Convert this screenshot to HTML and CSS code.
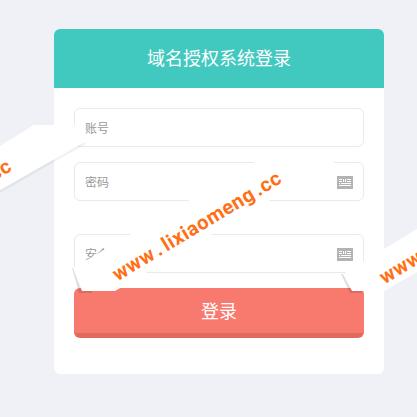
FILE: index.html
```html
<!DOCTYPE html>
<html lang="zh-CN">
<head>
    <meta charset="UTF-8">
    <meta name="viewport" content="width=device-width, initial-scale=1.0">
    <title>域名授权系统登录</title>
    <link rel="stylesheet" href="styles.css">
</head>
<body>
    <div class="login-box">
        <div class="login-title">域名授权系统登录</div>
        <form class="login-form">
            <div class="field"><input type="text" placeholder="账号"></div>
            <div class="field">
                <input type="password" placeholder="密码">
                <svg class="kbd-icon" viewBox="0 0 16 13">
                    <path d="M0 0h16v13H0z" fill="#b3b3b3"/>
                    <path d="M2 3h3v1H2zM6 3h1v3H6zM8 3h1v3H8zM10 3h4v1h-4zM2 5h3v1H2zM10 5h4v1h-4zM2 7h1v1H2zM4 7h10v1H4zM2 9h12v1H2z" fill="#fff"/>
                </svg>
            </div>
            <div class="field field-code">
                <input type="text" placeholder="安全码">
                <svg class="kbd-icon" viewBox="0 0 16 13">
                    <path d="M0 0h16v13H0z" fill="#b3b3b3"/>
                    <path d="M2 3h3v1H2zM6 3h1v3H6zM8 3h1v3H8zM10 3h4v1h-4zM2 5h3v1H2zM10 5h4v1h-4zM2 7h1v1H2zM4 7h10v1H4zM2 9h12v1H2z" fill="#fff"/>
                </svg>
            </div>
            <button type="button" class="login-btn">登录</button>
        </form>
    </div>

    <!-- watermark bands over the form -->
    <div class="wm wm-left"><div class="wm-band"></div><span class="wm-text">www . lixiaomeng .cc</span></div>
    <div class="wm wm-mid"><div class="wm-band"></div><span class="wm-text">www . lixiaomeng .cc</span></div>
    <div class="wm wm-right"><div class="wm-band"></div><span class="wm-text">www . lixiaomeng .cc</span></div>
</body>
</html>
```
FILE: styles.css
```css
* {
    margin: 0;
    padding: 0;
    box-sizing: border-box;
    font-family: "Noto Sans CJK SC", "Liberation Sans", sans-serif;
}

body {
    background: #f0f1f7;
    height: 417px;
    overflow: hidden;
    position: relative;
    padding: 29px 0 0 54px;
}

.login-box {
    width: 330px;
    height: 345px;
    background: #fff;
    border-radius: 6px;
    overflow: hidden;
}

.login-title {
    height: 59px;
    line-height: 57px;
    background: #42c9bf;
    color: #fff;
    font-size: 18px;
    text-align: center;
}

.login-form {
    padding: 20px;
    display: flex;
    flex-direction: column;
}

.field {
    position: relative;
    height: 39px;
    margin-bottom: 15px;
}

.field-code {
    margin-top: 18px;
}

.field input {
    width: 100%;
    height: 100%;
    padding: 0 10px;
    border: 1px solid #e9e9ee;
    border-radius: 6px;
    font-size: 12px;
    background: #fff;
    outline: none;
}

.field input::placeholder {
    color: #999;
}

.kbd-icon {
    position: absolute;
    right: 11px;
    top: 14px;
    width: 16px;
    height: 13px;
}

.login-btn {
    height: 50px;
    padding-bottom: 2px;
    background: #f87a6e;
    border: none;
    border-bottom: 5px solid #e2695e;
    border-radius: 6px;
    color: #fff;
    font-size: 18px;
    cursor: pointer;
}

.wm {
    position: absolute;
    left: 0;
    top: 0;
    width: 417px;
    height: 417px;
    overflow: hidden;
    pointer-events: none;
}

/* soft shadow under the torn edge of each band */
.wm::before {
    content: "";
    position: absolute;
    inset: 0;
    background: rgba(0, 0, 0, 0.12);
    filter: blur(0.6px);
}

.wm-left::before {
    background: rgba(0, 0, 0, 0.05);
    clip-path: polygon(0 190px, 84px 142px, 86px 144px, 0 193px);
}

.wm-mid::before {
    clip-path: polygon(72px 268px, 74px 268px, 84px 291px, 92px 291px, 92px 293px, 79px 293px);
}

.wm-right::before {
    clip-path: polygon(341px 274px, 344px 274px, 354px 291px, 362px 291px, 362px 293px, 350px 293px);
}

.wm-band {
    position: absolute;
    inset: 0;
    background: #fff;
}

.wm-left .wm-band {
    clip-path: polygon(0 146px, 34px 125px, 82px 125px, 84px 142px, 0 190px);
}

.wm-mid .wm-band {
    clip-path: polygon(73px 268px, 255px 162px, 335px 162px, 115px 291px, 82px 291px);
}

.wm-right .wm-band {
    clip-path: polygon(343px 274px, 417px 229px, 417px 272px, 384px 291px, 352px 291px);
}

.wm-text {
    position: absolute;
    color: #ff6f15;
    font-family: Roboto, sans-serif;
    font-weight: 700;
    font-size: 20px;
    letter-spacing: 0.6px;
    word-spacing: -3px;
    line-height: 1;
    white-space: nowrap;
    transform-origin: 0 100%;
    transform: rotate(-31deg);
}

.wm-mid .wm-text {
    left: 119px;
    top: 264px;
}

.wm-right .wm-text {
    left: 386px;
    top: 267px;
}

.wm-left .wm-text {
    left: -151px;
    top: 252px;
}
```
